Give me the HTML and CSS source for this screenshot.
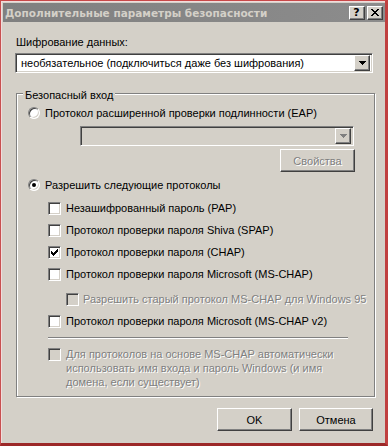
FILE: index.html
```html
<!DOCTYPE html>
<html lang="ru">
<head>
<meta charset="utf-8">
<link rel="stylesheet" href="styles.css">
</head>
<body>
<div class="window">
  <div class="titlebar">
    <span class="title">Дополнительные параметры безопасности</span>
    <div class="tb-buttons">
      <span class="tbtn help">?</span>
      <span class="tbtn close"><svg width="8" height="7" viewBox="0 0 8 7" shape-rendering="crispEdges"><path d="M0 0h2v1h1v1h2v-1h1v-1h2v1h-1v1h-1v1h-1v1h1v1h1v1h1v1h-2v-1h-1v-1h-2v1h-1v1h-2v-1h1v-1h1v-1h1v-1h-1v-1h-1v-1h-1z" fill="#000"/></svg></span>
    </div>
  </div>
  <div class="content">
    <div class="label">Шифрование данных:</div>
    <div class="combo main-combo">
      <span class="combo-text">необязательное (подключиться даже без шифрования)</span>
      <span class="dd-btn"><svg width="7" height="4" viewBox="0 0 7 4" shape-rendering="crispEdges"><path d="M0 0h7v1h-1v1h-1v1h-1v1h-1v-1h-1v-1h-1v-1h-1z" fill="#000"/></svg></span>
    </div>

    <div class="group">
      <span class="legend">Безопасный вход</span>
      <div class="row radio-row">
        <span class="radio"></span>
        <span class="text">Протокол расширенной проверки подлинности (EAP)</span>
      </div>
      <div class="eap-block">
        <div class="combo combo-disabled">
          <span class="combo-text"></span>
          <span class="dd-btn"><svg width="7" height="4" viewBox="0 0 7 4" shape-rendering="crispEdges"><path d="M0 0h7v1h-1v1h-1v1h-1v1h-1v-1h-1v-1h-1v-1h-1z" fill="#808080"/></svg></span>
        </div>
        <span class="btn btn-disabled props">Свойства</span>
      </div>
      <div class="row radio-row radio-allow">
        <span class="radio checked"></span>
        <span class="text">Разрешить следующие протоколы</span>
      </div>
      <div class="checks">
        <div class="row check-row">
          <span class="check"></span>
          <span class="text">Незашифрованный пароль (PAP)</span>
        </div>
        <div class="row check-row">
          <span class="check"></span>
          <span class="text">Протокол проверки пароля Shiva (SPAP)</span>
        </div>
        <div class="row check-row">
          <span class="check"><svg width="7" height="7" viewBox="0 0 7 7" shape-rendering="crispEdges"><path d="M0 2h1v3h-1zM1 3h1v3h-1zM2 4h1v3h-1zM3 3h1v3h-1zM4 2h1v3h-1zM5 1h1v3h-1zM6 0h1v3h-1z" fill="#000"/></svg></span>
          <span class="text">Протокол проверки пароля (CHAP)</span>
        </div>
        <div class="row check-row">
          <span class="check"></span>
          <span class="text">Протокол проверки пароля Microsoft (MS-CHAP)</span>
        </div>
        <div class="row check-row sub-row disabled">
          <span class="check"></span>
          <span class="text">Разрешить старый протокол MS-CHAP для Windows 95</span>
        </div>
        <div class="row check-row">
          <span class="check"></span>
          <span class="text">Протокол проверки пароля Microsoft (MS-CHAP v2)</span>
        </div>
      </div>
      <div class="separator"></div>
      <div class="multi-row disabled">
        <span class="check"></span>
        <span class="text">Для протоколов на основе MS-CHAP автоматически<br>использовать имя входа и пароль Windows (и имя<br>домена, если существует)</span>
      </div>
    </div>

    <div class="buttons">
      <span class="btn ok">OK</span>
      <span class="btn cancel">Отмена</span>
    </div>
  </div>
</div>
</body>
</html>
```

FILE: styles.css
```css
* { box-sizing: border-box; }
html, body { margin: 0; padding: 0; }
body {
  background: #d4d0c8;
  font-family: "Liberation Sans", Arial, sans-serif;
  font-size: 11px;
  color: #000;
}
.window {
  width: 388px;
  height: 446px;
  background: #d4d0c8;
  border-style: solid;
  border-width: 1px 3px 3px 1px;
  border-color: #c84848 #c04040 #9c2828 #c85050;
  box-shadow: inset 1px 1px 0 #f2dcdc;
  display: flex;
  flex-direction: column;
}
.titlebar {
  margin: 2px 0 0 2px;
  height: 19px;
  background: linear-gradient(to right, #808080, #8c8c8c);
  display: flex;
  align-items: center;
  justify-content: space-between;
  padding-left: 2px;
}
.title {
  font-family: "DejaVu Sans", sans-serif;
  font-weight: bold;
  font-size: 10.5px;
  color: #d4d0c8;
  white-space: nowrap;
}
.tb-buttons {
  display: flex;
  gap: 2px;
  margin-right: 2px;
}
.tbtn {
  width: 16px;
  height: 14px;
  background: #d4d0c8;
  border: 1px solid;
  border-color: #fff #404040 #404040 #fff;
  box-shadow: inset -1px -1px 0 #808080;
  display: flex;
  align-items: center;
  justify-content: center;
}
.help {
  font-family: "DejaVu Sans", sans-serif;
  font-weight: bold;
  font-size: 11px;
  line-height: 12px;
  padding-right: 1px;
}
.content {
  flex: 1;
  display: flex;
  flex-direction: column;
  align-items: flex-start;
}
.label {
  margin: 13px 0 0 15px;
  line-height: 14px;
}
.combo {
  height: 20px;
  border: 1px solid;
  border-color: #808080 #fff #fff #808080;
  box-shadow: inset 1px 1px 0 #404040, inset -1px -1px 0 #d4d0c8;
  background: #fff;
  display: flex;
  align-items: center;
  padding: 2px;
}
.main-combo {
  margin: 4px 0 0 14px;
  width: 358px;
}
.combo-text {
  flex: 1;
  padding-left: 3px;
  line-height: 14px;
  white-space: nowrap;
}
.dd-btn {
  width: 16px;
  height: 16px;
  background: #d4d0c8;
  border: 1px solid;
  border-color: #fff #404040 #404040 #fff;
  box-shadow: inset -1px -1px 0 #808080;
  display: flex;
  align-items: center;
  justify-content: center;
}
.combo-disabled { background: #d4d0c8; }
.group {
  position: relative;
  margin: 20px 0 0 15px;
  width: 359px;
  border: 1px solid #808080;
  box-shadow: inset 1px 1px 0 #fff, 1px 1px 0 #fff;
  padding: 8px 0 7px 0;
  display: flex;
  flex-direction: column;
}
.legend {
  position: absolute;
  left: 6px;
  top: -6px;
  padding: 0 2px;
  background: #d4d0c8;
  line-height: 14px;
}
.row {
  height: 22px;
  display: flex;
  align-items: center;
  line-height: 14px;
  white-space: nowrap;
}
.radio-row { padding-left: 11px; gap: 5px; }
.radio-allow { margin-top: 2px; }
.radio {
  width: 12px;
  height: 12px;
  border-radius: 50%;
  border: 1px solid;
  border-color: #808080 #fff #fff #808080;
  box-shadow: inset 1px 1px 0 #404040, inset -1px -1px 0 #d4d0c8;
  background: #fff;
  position: relative;
  flex: none;
}
.radio.checked::after {
  content: "";
  position: absolute;
  left: 3px;
  top: 3px;
  width: 4px;
  height: 4px;
  border-radius: 50%;
  background: #000;
}
.eap-block {
  margin: 2px 0 0 63px;
  width: 275px;
  display: flex;
  flex-direction: column;
  align-items: flex-end;
}
.eap-block .combo { width: 274px; align-self: flex-start; }
.btn {
  height: 23px;
  width: 75px;
  background: #d4d0c8;
  border: 1px solid;
  border-color: #fff #404040 #404040 #fff;
  box-shadow: inset -1px -1px 0 #808080;
  display: flex;
  align-items: center;
  justify-content: center;
  line-height: 14px;
}
.props { margin-top: 3px; }
.btn-disabled, .disabled .text {
  color: #808080;
  text-shadow: 1px 1px 0 #fff;
}
.checks {
  margin-top: 1px;
  display: flex;
  flex-direction: column;
}
.check-row { padding-left: 31px; gap: 5px; }
.sub-row { padding-left: 49px; gap: 4px; margin-top: 3px; }
.check {
  width: 13px;
  height: 13px;
  border: 1px solid;
  border-color: #808080 #fff #fff #808080;
  box-shadow: inset 1px 1px 0 #404040, inset -1px -1px 0 #d4d0c8;
  background: #fff;
  flex: none;
  display: flex;
  align-items: center;
  justify-content: center;
}
.disabled .check { background: #d4d0c8; }
.separator {
  margin: 5px 0 0 31px;
  width: 300px;
  height: 2px;
  border-top: 1px solid #808080;
  border-bottom: 1px solid #fff;
}
.multi-row {
  margin: 8px 0 0 31px;
  display: flex;
  gap: 5px;
  align-items: flex-start;
}
.multi-row .check { margin-top: 1px; }
.multi-row .text {
  line-height: 14px;
  white-space: nowrap;
}
.buttons {
  align-self: stretch;
  margin-top: 11px;
  padding-right: 12px;
  display: flex;
  justify-content: flex-end;
  gap: 7px;
}
.cancel { width: 74px; }
```
